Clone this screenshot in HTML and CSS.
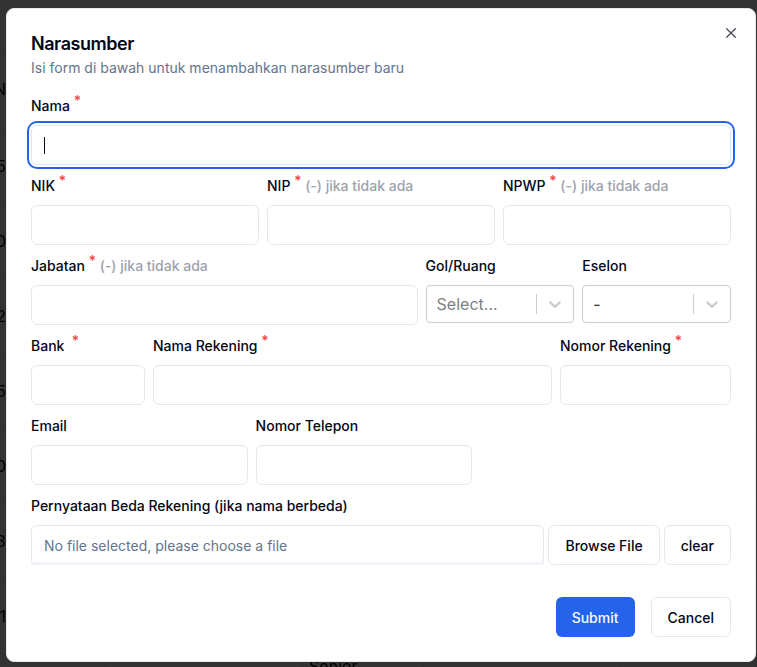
FILE: index.html
```html
<!DOCTYPE html>
<html lang="id">
<head>
<meta charset="utf-8">
<meta name="viewport" content="width=device-width, initial-scale=1">
<title>Narasumber</title>
<link rel="stylesheet" href="styles.css">
</head>
<body>
<div class="backdrop" aria-hidden="true">
  <table class="backdrop-table">
    <tr class="spacer"><td></td><td></td><td></td><td></td><td></td><td></td></tr>
    <tr class="head"><td><span>N</span></td><td colspan="5"></td></tr>
    <tr><td><span>5</span></td><td colspan="5"></td></tr>
    <tr><td><span>0</span></td><td colspan="5"></td></tr>
    <tr><td><span>2</span></td><td colspan="5"></td></tr>
    <tr><td><span>5</span></td><td colspan="5"></td></tr>
    <tr><td><span>0</span></td><td colspan="5"></td></tr>
    <tr><td><span>3</span></td><td colspan="5"></td></tr>
    <tr><td><span>1</span></td><td colspan="5"></td></tr>
    <tr class="last"><td></td><td></td><td>Senior</td><td></td><td></td><td></td></tr>
  </table>
</div>

<main class="overlay">
  <section class="dialog" role="dialog" aria-modal="true" aria-labelledby="dialog-title">
    <button class="close" type="button" aria-label="Tutup">
      <svg width="16" height="16" viewBox="0 0 24 24" fill="none" stroke="currentColor" stroke-width="2" stroke-linecap="round"><path d="M18.5 5.5l-13 13M5.5 5.5l13 13"/></svg>
    </button>
    <header class="dialog-header">
      <h1 id="dialog-title">Narasumber</h1>
      <p>Isi form di bawah untuk menambahkan narasumber baru</p>
    </header>

    <form>
      <div class="row">
        <div class="field">
          <label for="nama">Nama <sup>*</sup></label>
          <div class="control">
            <input class="input active" id="nama" type="text">
            <span class="caret"></span>
          </div>
        </div>
      </div>

      <div class="row row-identity">
        <div class="field">
          <label for="nik">NIK <sup>*</sup></label>
          <input class="input" id="nik" type="text">
        </div>
        <div class="field">
          <label for="nip">NIP <sup>*</sup> <span class="hint">(-) jika tidak ada</span></label>
          <input class="input" id="nip" type="text">
        </div>
        <div class="field">
          <label for="npwp">NPWP <sup>*</sup> <span class="hint">(-) jika tidak ada</span></label>
          <input class="input" id="npwp" type="text">
        </div>
      </div>

      <div class="row row-position">
        <div class="field">
          <label for="jabatan">Jabatan <sup>*</sup> <span class="hint">(-) jika tidak ada</span></label>
          <input class="input" id="jabatan" type="text">
        </div>
        <div class="field">
          <label for="golongan">Gol/Ruang</label>
          <div class="control">
            <select class="select" id="golongan"><option>Select...</option></select>
            <span class="indicator"><svg width="20" height="20" viewBox="0 0 20 20" fill="currentColor"><path d="M4.516 7.548c0.436-0.446 1.043-0.481 1.576 0l3.908 3.747 3.908-3.747c0.533-0.481 1.141-0.446 1.574 0 0.436 0.445 0.408 1.197 0 1.615-0.406 0.418-4.695 4.502-4.695 4.502-0.217 0.223-0.502 0.335-0.787 0.335s-0.57-0.112-0.789-0.335c0 0-4.287-4.084-4.695-4.502s-0.436-1.17 0-1.615z"/></svg></span>
          </div>
        </div>
        <div class="field">
          <label for="eselon">Eselon</label>
          <div class="control">
            <select class="select chosen" id="eselon"><option>-</option></select>
            <span class="indicator"><svg width="20" height="20" viewBox="0 0 20 20" fill="currentColor"><path d="M4.516 7.548c0.436-0.446 1.043-0.481 1.576 0l3.908 3.747 3.908-3.747c0.533-0.481 1.141-0.446 1.574 0 0.436 0.445 0.408 1.197 0 1.615-0.406 0.418-4.695 4.502-4.695 4.502-0.217 0.223-0.502 0.335-0.787 0.335s-0.57-0.112-0.789-0.335c0 0-4.287-4.084-4.695-4.502s-0.436-1.17 0-1.615z"/></svg></span>
          </div>
        </div>
      </div>

      <div class="row row-account">
        <div class="field">
          <label for="bank">Bank&nbsp; <sup>*</sup></label>
          <input class="input" id="bank" type="text">
        </div>
        <div class="field">
          <label for="nama-rekening">Nama Rekening <sup>*</sup></label>
          <input class="input" id="nama-rekening" type="text">
        </div>
        <div class="field">
          <label for="nomor-rekening">Nomor Rekening <sup>*</sup></label>
          <input class="input" id="nomor-rekening" type="text">
        </div>
      </div>

      <div class="row row-contact">
        <div class="field">
          <label for="email">Email</label>
          <input class="input" id="email" type="email">
        </div>
        <div class="field">
          <label for="telepon">Nomor Telepon</label>
          <input class="input" id="telepon" type="tel">
        </div>
      </div>

      <div class="row">
        <div class="field">
          <label for="berkas">Pernyataan Beda Rekening (jika nama berbeda)</label>
          <div class="file">
            <div class="control file-name">
              <input class="input" id="berkas" type="text" placeholder="No file selected, please choose a file" readonly>
            </div>
            <button class="button" type="button">Browse File</button>
            <button class="button" type="button">clear</button>
          </div>
        </div>
      </div>

      <footer class="actions">
        <button class="button primary" type="submit">Submit</button>
        <button class="button" type="button">Cancel</button>
      </footer>
    </form>
  </section>
</main>
</body>
</html>
```
FILE: styles.css
```css
* {
  box-sizing: border-box;
}

body {
  margin: 0;
  background: #333;
  color: #020817;
  font: 14px/20px Inter, sans-serif;
}

button,
input,
select {
  font: inherit;
  color: inherit;
}

/* Dimmed page behind the dialog */
.backdrop {
  position: fixed;
  inset: 0;
  overflow: hidden;
}

.backdrop-table {
  width: 100%;
  table-layout: fixed;
  border-collapse: collapse;
  color: #000;
  font-size: 16px;
}

.backdrop-table td {
  height: 75px;
  padding: 0;
  border-bottom: 1px solid #2d2e30;
}

.backdrop-table .spacer td {
  height: 50px;
}

.backdrop-table .head td {
  height: 78px;
}

.backdrop-table span {
  display: flex;
  justify-content: flex-end;
  width: 6px;
}

.backdrop-table .last td {
  padding: 2px 6px;
  border-right: 1px solid #2d2e30;
  vertical-align: top;
}

.backdrop-table td:nth-child(1) { width: 14%; }
.backdrop-table td:nth-child(2) { width: 26%; }
.backdrop-table td:nth-child(3) { width: 16%; }
.backdrop-table td:nth-child(4) { width: 11%; }
.backdrop-table td:nth-child(5) { width: 15%; }

/* Dialog */
.overlay {
  position: relative;
  padding: 8px 1px 5px 6px;
}

.dialog {
  position: relative;
  padding: 24px;
  border: 1px solid #e2e8f0;
  border-radius: 8px;
  background: #fff;
}

.close {
  position: absolute;
  top: 16px;
  right: 16px;
  display: flex;
  padding: 0;
  border: 0;
  background: none;
  opacity: 0.7;
}

.dialog-header {
  margin-bottom: 15px;
}

.dialog-header h1 {
  margin: 0 0 3px;
  font-size: 18px;
  line-height: 22px;
  font-weight: 600;
  letter-spacing: -0.025em;
}

.dialog-header p {
  margin: 0;
  color: #64748b;
}

form {
  display: flex;
  flex-direction: column;
  gap: 8px;
}

.row {
  display: grid;
  gap: 8px;
}

.row-identity { grid-template-columns: repeat(3, 1fr); }
.row-position { grid-template-columns: 13fr 5fr 5fr; }
.row-account { grid-template-columns: 2fr 7fr 3fr; }
.row-contact { grid-template-columns: 19fr 19fr 22fr; }

.field {
  min-width: 0;
}

label {
  display: block;
  height: 24px;
  margin-bottom: 8px;
  line-height: 26px;
  font-weight: 500;
  white-space: nowrap;
}

sup {
  position: relative;
  top: -5px;
  color: #ef4444;
  font-size: 14px;
  line-height: 0;
  vertical-align: baseline;
}

.hint {
  color: #9ca3af;
}

.control {
  position: relative;
}

.input {
  display: block;
  width: 100%;
  height: 40px;
  padding: 8px 12px;
  border: 1px solid #e2e8f0;
  border-radius: 6px;
  outline: none;
  background: #fff;
}

.input::placeholder {
  color: #64748b;
  opacity: 1;
}

.input:focus,
.input.active {
  box-shadow: 0 0 0 2px #fff, 0 0 0 4px #2563eb;
}

.input.active {
  caret-color: transparent;
}

.caret {
  position: absolute;
  top: 12px;
  left: 13px;
  width: 1px;
  height: 17px;
  background: #020817;
}

.select {
  display: block;
  width: 100%;
  height: 38px;
  padding: 0 40px 0 10px;
  border: 1px solid #ccc;
  border-radius: 4px;
  appearance: none;
  background: #fff;
  color: #808080;
  font-size: 16px;
}

.select.chosen {
  color: #333;
}

.indicator {
  position: absolute;
  top: 9px;
  right: 1px;
  display: flex;
  padding: 0 8px;
  border-left: 1px solid #ccc;
  color: #ccc;
  pointer-events: none;
}

.file {
  display: flex;
  gap: 4px;
}

.file-name {
  flex: 1;
}

.file-name::after {
  content: "";
  position: absolute;
  right: 0;
  bottom: 0;
  left: 0;
  height: 3px;
  background: #f1f5f9;
}

.button {
  height: 40px;
  padding: 2px 16px 0;
  border: 1px solid #e2e8f0;
  border-radius: 6px;
  background: #fff;
  font-weight: 500;
  white-space: nowrap;
}

.button.primary {
  border-width: 0;
  background: #2563eb;
  color: #f8fafc;
}

.actions {
  display: flex;
  justify-content: flex-end;
  gap: 16px;
  margin-top: 24px;
}
```
